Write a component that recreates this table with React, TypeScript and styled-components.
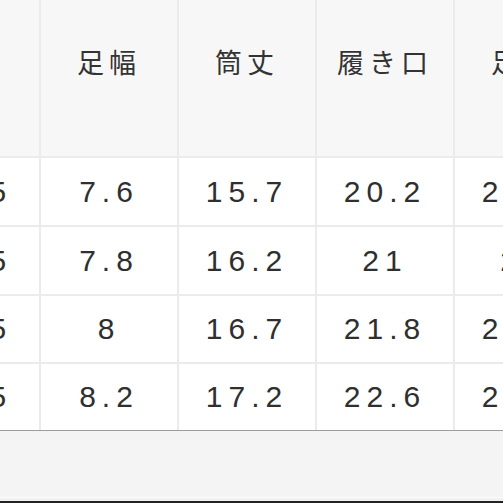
import React from 'react';
import styled, { createGlobalStyle } from 'styled-components';

const GlobalStyle = createGlobalStyle`
  html, body {
    margin: 0;
    padding: 0;
    background: #f4f4f4;
  }
`;

const columns = ['足長', '足幅', '筒丈', '履き口', '足囲'];

const rows = [
  ['23.5', '7.6', '15.7', '20.2', '21.5'],
  ['24.5', '7.8', '16.2', '21', '22'],
  ['25.5', '8', '16.7', '21.8', '22.5'],
  ['26.5', '8.2', '17.2', '22.6', '23.5'],
];

const rowHeights = [69, 69, 68, 67];

const App = () => {
  return (
    <>
      <GlobalStyle />
      <Page>
        <TableWrap>
          <Table>
            <colgroup>
              {columns.map((c) => (
                <col key={c} style={{ width: 138 }} />
              ))}
            </colgroup>
            <thead>
              <tr>
                {columns.map((c) => (
                  <Th key={c}>{c}</Th>
                ))}
              </tr>
            </thead>
            <tbody>
              {rows.map((row, i) => (
                <tr key={i} style={{ height: rowHeights[i] }}>
                  {row.map((v, j) => (
                    <Td key={j}>{v}</Td>
                  ))}
                </tr>
              ))}
            </tbody>
          </Table>
        </TableWrap>
        <Spacer />
        <Footer />
      </Page>
    </>
  );
};

const Page = styled.div`
  height: 503px;
  width: 503px;
  overflow: hidden;
  display: flex;
  flex-direction: column;
  background: #f4f4f4;
`;

const TableWrap = styled.div`
  width: 690px;
  margin-left: -99px;
  border-bottom: 1px solid #9c9c9c;
  flex: none;
`;

const Table = styled.table`
  width: 690px;
  table-layout: fixed;
  border-collapse: collapse;
  background: #ffffff;
  color: #2b2b2b;
`;

const Th = styled.th`
  height: 157px;
  box-sizing: border-box;
  padding: 46px 0 0 0;
  vertical-align: top;
  background: #f7f7f7;
  border: 2px solid #ebebeb;
  border-top: none;
  font-family: 'Noto Sans CJK JP', sans-serif;
  font-weight: 400;
  font-size: 27px;
  line-height: 32px;
  letter-spacing: 5px;
  color: #333333;
  text-align: center;
`;

const Td = styled.td`
  padding: 0;
  border: 2px solid #ebebeb;
  text-align: center;
  vertical-align: middle;
  font-family: 'Liberation Sans', Arial, sans-serif;
  font-size: 30px;
  line-height: 32px;
  letter-spacing: 6px;
  color: #2f2f2f;

  tr:last-child > & {
    border-bottom: none;
  }
`;

const Spacer = styled.div`
  flex: 1;
`;

const Footer = styled.div`
  flex: none;
  height: 3px;
  border-top: 1px solid #ffffff;
  border-bottom: 2px solid #222222;
  background: #f1f1f1;
`;

export default App;
